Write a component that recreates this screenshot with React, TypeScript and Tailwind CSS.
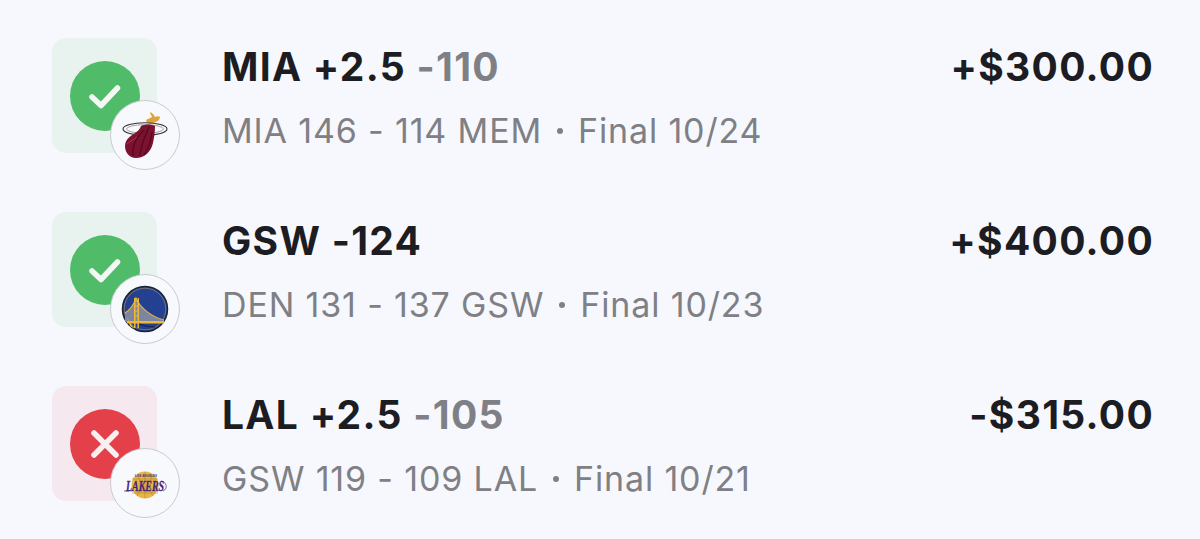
import type { ReactNode } from 'react'

function HeatLogo() {
  return (
    <svg viewBox="0 0 70 70" className="w-[70px] h-[70px]">
      {/* flame tip */}
      <path d="M36 20 C38 19 40 18 42 17 C41 15 40 13 40 12 C43 13 44 15 45 17 C47 16 49 16 50 17 C50 20 47 22 43 23 C40 24 36 23 36 20 Z" fill="#dfa33a" />
      {/* hoop */}
      <ellipse cx="35" cy="29" rx="22" ry="6.3" fill="none" stroke="#35322f" strokeWidth="1.1" />
      <ellipse cx="35" cy="29" rx="18.5" ry="4.3" fill="none" stroke="#9b9797" strokeWidth="0.9" />
      {/* ball */}
      <path d="M31 26 C35 24 41 24 45 26 C45 32 44 38 43 43 C41 52 34 58 26 58 C19 58 15 52 15 46 C15 39 21 36 25 33 C28 31 30 29 31 26 Z" fill="#7c1230" />
      <path d="M39 27 C36 35 31 42 30 56 M34 30 C27 37 22 44 23 56 M42 32 C41 42 38 49 34 55" fill="none" stroke="#4e0a1e" strokeWidth="1.2" />
      <path d="M17 44 C21 41 24 39 27 37" fill="none" stroke="#a83a50" strokeWidth="1" />
    </svg>
  )
}

function WarriorsLogo() {
  return (
    <svg viewBox="0 0 70 70" className="w-[70px] h-[70px]">
      <circle cx="35" cy="35" r="22.5" fill="#234190" stroke="#1a2238" strokeWidth="1.5" />
      <circle cx="35" cy="35" r="20.8" fill="none" stroke="#c9a24a" strokeWidth="0.5" />
      {/* cables fill */}
      <path d="M15 39 C20 36 24 30 26 24 C30 34 42 43 54 46 L54 48 L15 48 Z" fill="#7d86a0" />
      <path d="M15 39 C20 36 24 30 26 24 C30 34 42 43 54 46" fill="none" stroke="#e8b23a" strokeWidth="1.1" />
      {/* tower */}
      <path d="M24 24 H25.5 V54 H24 Z M27.5 24 H29 V54 H27.5 Z" fill="#eeb735" />
      <path d="M24 27 H29 M24 32 H29 M24 37 H29 M24 42 H29" stroke="#eeb735" strokeWidth="1.1" />
      {/* deck */}
      <path d="M17 47 H54 V49.5 H17 Z" fill="#eeb735" />
      <path d="M17 43 C19 47 22 52 25 55 L20 52 Z" fill="#eeb735" />
      <path d="M29 50 C34 52 38 53 45 53" fill="none" stroke="#1a2238" strokeWidth="1.2" />
    </svg>
  )
}

function LakersLogo() {
  return (
    <svg viewBox="0 0 70 70" className="w-[70px] h-[70px]">
      <circle cx="35" cy="37" r="13.5" fill="#e8b548" />
      <path d="M22 31 H48 M22 45 H48 M35 24 V50 M27 26 C31 32 31 42 27 48 M43 26 C39 32 39 42 43 48" fill="none" stroke="#a67e26" strokeWidth="0.5" />
      <text x="36" y="29" textAnchor="middle" fontFamily="'Liberation Sans', sans-serif" fontWeight="700" fontSize="3" fill="#4a2a80" textLength="22">LOS ANGELES</text>
      <text x="35" y="43" textAnchor="middle" fontFamily="'Liberation Serif', serif" fontStyle="italic" fontWeight="700" fontSize="15" fill="#452577" stroke="#452577" strokeWidth="0.3" textLength="38" lengthAdjust="spacingAndGlyphs">LAKERS</text>
      <path d="M14 43 H19 M51 33 C57 34 58 41 53 43" fill="none" stroke="#452577" strokeWidth="0.7" />
    </svg>
  )
}

function Check() {
  return (
    <svg viewBox="0 0 70 70" className="w-[70px] h-[70px]">
      <path d="M22 36 L31 44.5 L47.5 27" fill="none" stroke="#f4f8f4" strokeWidth="5.5" strokeLinecap="round" strokeLinejoin="round" />
    </svg>
  )
}

function Cross() {
  return (
    <svg viewBox="0 0 70 70" className="w-[70px] h-[70px]">
      <path d="M24 24 L46 46 M46 24 L24 46" fill="none" stroke="#f8f0f0" strokeWidth="5.5" strokeLinecap="round" />
    </svg>
  )
}

type Bet = {
  won: boolean
  pick: string
  odds?: string
  score: string
  final: string
  amount: string
  logo: ReactNode
}

const BETS: Bet[] = [
  { won: true, pick: 'MIA +2.5', odds: '-110', score: 'MIA 146 - 114 MEM', final: 'Final 10/24', amount: '+$300.00', logo: <HeatLogo /> },
  { won: true, pick: 'GSW -124', score: 'DEN 131 - 137 GSW', final: 'Final 10/23', amount: '+$400.00', logo: <WarriorsLogo /> },
  { won: false, pick: 'LAL +2.5', odds: '-105', score: 'GSW 119 - 109 LAL', final: 'Final 10/21', amount: '-$315.00', logo: <LakersLogo /> },
]

function BetRow({ bet }: { bet: Bet }) {
  return (
    <div className="flex items-start h-[115px]">
      <div className={`relative w-[105px] h-[115px] rounded-[14px] flex items-center justify-start pl-[18px] shrink-0 ${bet.won ? 'bg-[#e8f3f0]' : 'bg-[#f5e8ee]'}`}>
        <div className={`w-[70px] h-[70px] rounded-full ${bet.won ? 'bg-[#50bb68]' : 'bg-[#e3404a]'}`}>
          {bet.won ? <Check /> : <Cross />}
        </div>
        <div className="absolute left-[58px] top-[62px] w-[70px] h-[70px] rounded-full bg-[#f8f9fd] border border-[#c9cbd0] flex items-center justify-center">
          <div className="shrink-0">{bet.logo}</div>
        </div>
      </div>
      <div className="ml-[65px] flex-1">
        <div className="text-[39px] leading-[58px] font-bold tracking-[1.3px] text-[#1c1d22]">
          {bet.pick} {bet.odds && <span className="text-[#7f8085]">{bet.odds}</span>}
        </div>
        <div className="mt-[7px] text-[34px] leading-[56px] tracking-[0.85px] text-[#7f8085] flex items-center">
          <span>{bet.score}</span>
          <span className="w-[6px] h-[6px] rounded-full bg-[#7f8085] mx-[15px]" />
          <span>{bet.final}</span>
        </div>
      </div>
      <div className="text-[39px] leading-[58px] font-bold tracking-[1.3px] text-[#1c1d22]">{bet.amount}</div>
    </div>
  )
}

export default function App() {
  return (
    <div className="w-[1200px] h-[539px] overflow-hidden bg-[#f7f8fd] pl-[52px] pr-[46px] pt-[38px] flex flex-col gap-[59px] font-['Inter',sans-serif]">
      {BETS.map(bet => <BetRow key={bet.amount} bet={bet} />)}
    </div>
  )
}
